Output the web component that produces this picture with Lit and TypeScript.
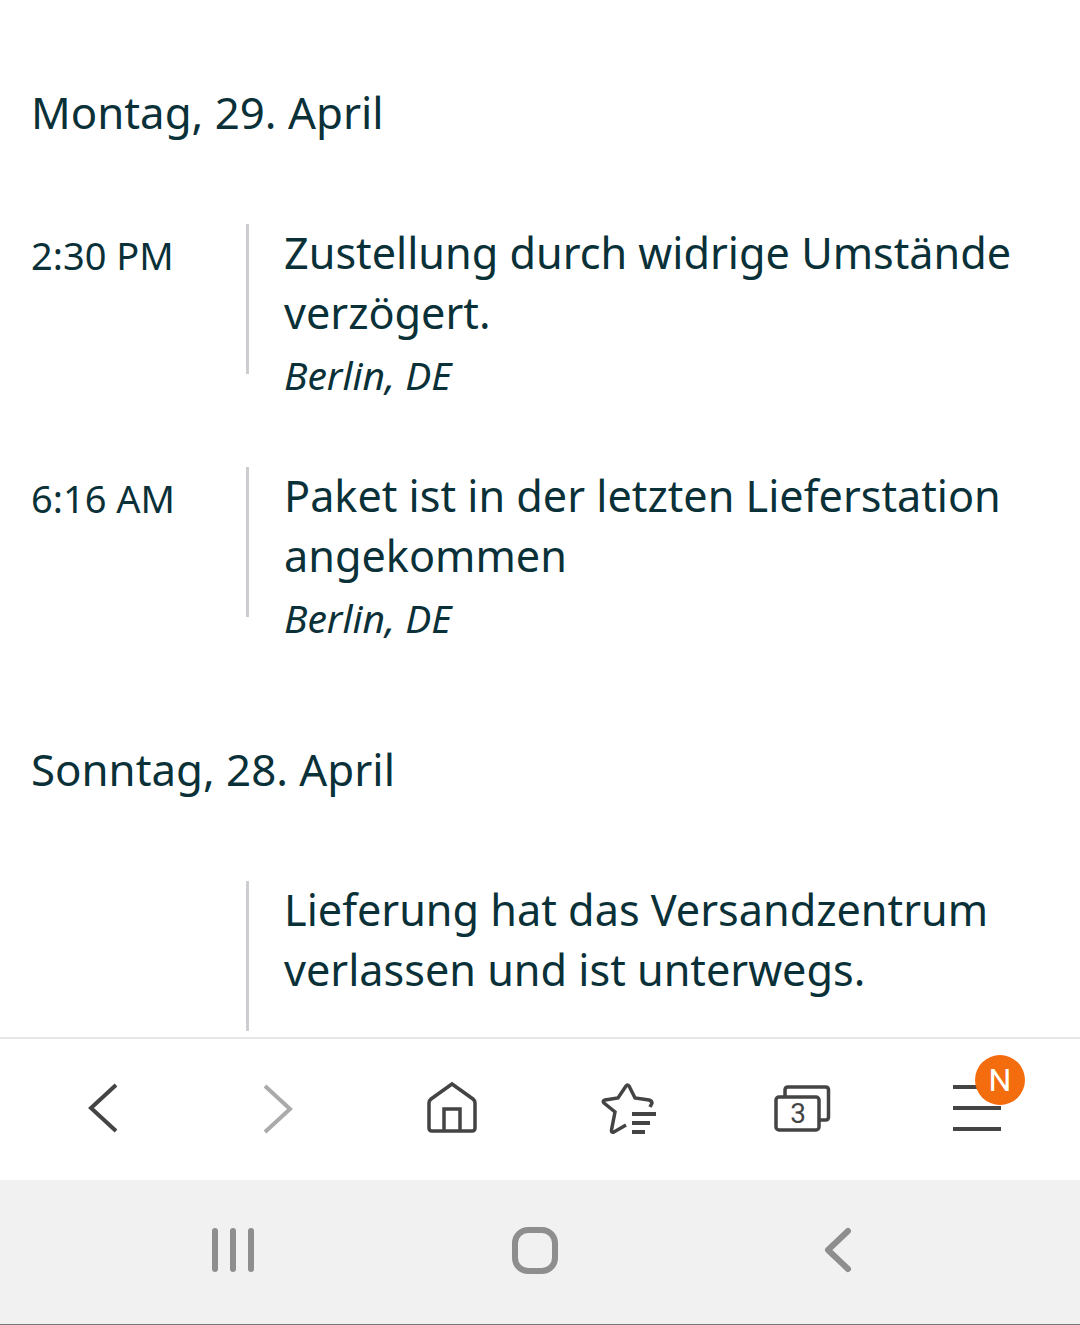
import { LitElement, html, css, svg } from 'lit';
import { customElement } from 'lit/decorators.js';

type Entry = { time: string; text: string; place?: string };
type Day = { title: string; entries: Entry[] };

const days: Day[] = [
  {
    title: 'Montag, 29. April',
    entries: [
      { time: '2:30 PM', text: 'Zustellung durch widrige Umstände verzögert.', place: 'Berlin, DE' },
      { time: '6:16 AM', text: 'Paket ist in der letzten Lieferstation angekommen', place: 'Berlin, DE' },
    ],
  },
  {
    title: 'Sonntag, 28. April',
    entries: [{ time: '', text: 'Lieferung hat das Versandzentrum verlassen und ist unterwegs.' }],
  },
];

const toolbarIcons = [
  svg`<path d="M43 6 18 29 43 52"/>`,
  svg`<path class="off" d="M17 7 42 30 17 53"/>`,
  svg`<path class="thin" d="M29 5 8 20q-2 1.500-2 4v25q0 3 3 3h40q3 0 3-3V24q0-2.500-2-4Z"/><path class="thin" d="M21 52V30h16v22"/>`,
  svg`<path class="thin" d="M28 46 16 53q-3 1-2.500-2L17 33 6 24q-2-2 1-3l13-2 8-12q1.500-2 3 0l6 12 14 2q3 1 3 3l-2 4"/><path d="M34 35h24M34 44h18M34 53h13"/>`,
  svg`<path class="thin" d="M12 18v-7q0-3 3-3h37.500q3 0 3 3v27q0 3-3 3H46"/><rect class="thin" x="3" y="18" width="43" height="33" rx="3"/><text x="25" y="44" class="count">3</text>`,
  svg`<path d="M5 8h48M5 29h48M5 50h48"/>`,
];

@customElement('app-root')
export class AppRoot extends LitElement {
  static styles = css`
    :host {
      display: flex;
      flex-direction: column;
      width: 1080px;
      height: 1325px;
      overflow: hidden;
      background: #fff;
      font-family: 'Noto Sans', sans-serif;
      color: #0a3038;
    }

    .content {
      height: 1037px;
      overflow: hidden;
      padding: 82px 0 0 31px;
      box-sizing: border-box;
    }

    .day-title {
      margin: 0 0 82px;
      font-size: 43.8px;
      line-height: 60px;
      font-weight: 400;
    }

    .entry {
      display: flex;
      align-items: flex-start;
      margin-bottom: 60px;
    }

    .entry:last-child {
      margin-bottom: 89px;
    }

    .time {
      width: 215px;
      flex: none;
      padding-top: 1px;
      font-size: 38px;
      line-height: 60px;
    }

    .rule {
      width: 3px;
      height: 150px;
      flex: none;
      background: #cccdd0;
    }

    .body {
      width: 770px;
      margin-top: -1px;
      padding-left: 35px;
    }

    .text {
      font-size: 43.2px;
      line-height: 60px;
    }

    .place {
      font-size: 39px;
      font-style: italic;
      line-height: 64px;
    }

    .toolbar {
      display: flex;
      height: 143px;
      padding: 0 15px 1px;
      box-sizing: border-box;
      border-top: 2px solid #e6e6e6;
      background: #fff;
    }

    .slot {
      position: relative;
      flex: 1;
      display: flex;
      align-items: center;
      justify-content: center;
    }

    .slot svg {
      width: 60px;
      height: 60px;
      margin-left: 1px;
      fill: none;
      stroke: #444;
      stroke-width: 4;
    }

    .slot .off {
      stroke: #aaa;
    }

    .slot .thin {
      stroke-width: 3.5;
    }

    .slot .count {
      fill: #444;
      stroke: none;
      font-family: Roboto, sans-serif;
      font-size: 28px;
      text-anchor: middle;
    }

    .badge {
      position: absolute;
      left: 85px;
      top: 16px;
      width: 50px;
      height: 50px;
      border-radius: 50%;
      background: #f36c0e;
      color: #fff;
      font-family: Roboto, sans-serif;
      font-size: 32px;
      line-height: 50px;
      text-align: center;
    }

    .navbar {
      flex: 1;
      display: flex;
      padding: 0 92px 0 82px;
      background: #f1f1f1;
      border-bottom: 1px solid #777;
    }

    .nav-slot {
      flex: 1;
      display: flex;
      align-items: center;
      justify-content: center;
    }

    .nav-slot svg {
      width: 60px;
      height: 60px;
      fill: none;
      stroke: #8e8e8e;
      stroke-width: 6;
      stroke-linecap: round;
      stroke-linejoin: round;
    }
  `;

  render() {
    return html`
      <div class="content">
        ${days.map(
          (day) => html`
            <section>
              <h2 class="day-title">${day.title}</h2>
              ${day.entries.map(
                (entry) => html`
                  <div class="entry">
                    <div class="time">${entry.time}</div>
                    <div class="rule"></div>
                    <div class="body">
                      <div class="text">${entry.text}</div>
                      ${entry.place ? html`<div class="place">${entry.place}</div>` : ''}
                    </div>
                  </div>
                `
              )}
            </section>
          `
        )}
      </div>
      <div class="toolbar">
        ${toolbarIcons.map(
          (icon, i) => html`
            <div class="slot">
              <svg viewBox="0 0 60 60">${icon}</svg>
              ${i === 5 ? html`<div class="badge">N</div>` : ''}
            </div>
          `
        )}
      </div>
      <div class="navbar">
        <div class="nav-slot">
          <svg viewBox="0 0 60 60"><path d="M12 9v38M30 9v38M48 9v38" /></svg>
        </div>
        <div class="nav-slot">
          <svg viewBox="0 0 60 60"><rect x="10" y="8" width="40" height="41" rx="13" /></svg>
        </div>
        <div class="nav-slot">
          <svg viewBox="0 0 60 60"><path d="M41 9 21 28l20 19" /></svg>
        </div>
      </div>
    `;
  }
}
